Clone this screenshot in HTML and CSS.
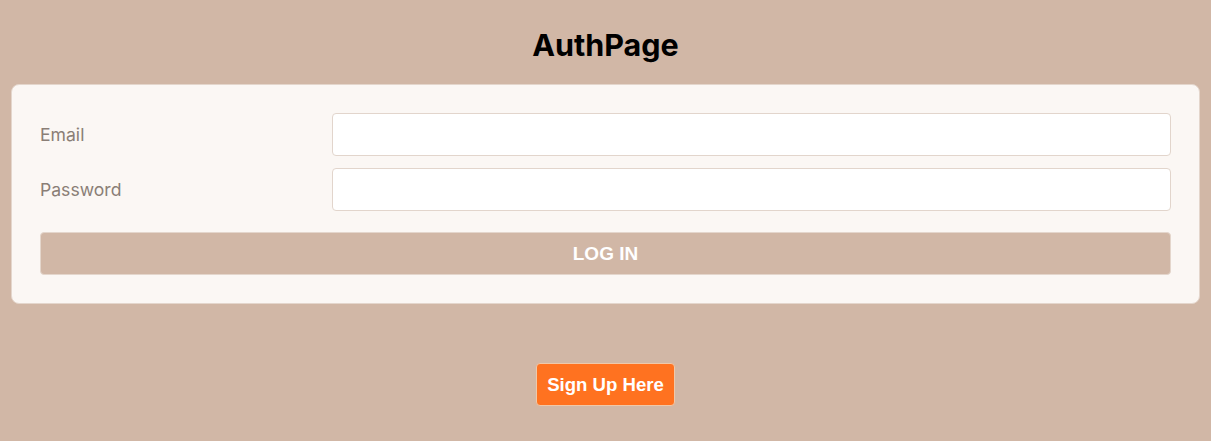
FILE: index.html
```html
<!DOCTYPE html>
<html lang="en">
<head>
<meta charset="utf-8">
<title>AuthPage</title>
<link rel="stylesheet" href="styles.css">
</head>
<body>
  <main class="page">
    <h1 class="title">AuthPage</h1>
    <form class="card">
      <div class="row">
        <label class="label" for="email">Email</label>
        <input class="input" id="email" type="email">
      </div>
      <div class="row">
        <label class="label" for="password">Password</label>
        <input class="input" id="password" type="password">
      </div>
      <button class="login" type="button">LOG IN</button>
    </form>
    <div class="signup-wrap">
      <button class="signup" type="button">Sign Up Here</button>
    </div>
  </main>
</body>
</html>
```

FILE: styles.css
```css
html, body {
  margin: 0;
  padding: 0;
  background: #d1b7a6;
  font-family: Inter, "Noto Sans", sans-serif;
}

.page {
  padding: 0 11px 0 11px;
  display: flex;
  flex-direction: column;
}

.title {
  margin: 0;
  padding-top: 25px;
  height: 84px;
  box-sizing: border-box;
  text-align: center;
  font-size: 30.5px;
  font-weight: 700;
  line-height: 40px;
  color: #000;
}

.card {
  background: #fbf7f4;
  border: 1px solid #e4d6cc;
  border-radius: 8px;
  padding: 28px 28px 28px 28px;
  display: flex;
  flex-direction: column;
  gap: 12px;
}

.row {
  display: flex;
  align-items: center;
}

.label {
  width: 292px;
  flex: none;
  font-size: 17.6px;
  color: #8a7e76;
}

.input {
  flex: 1;
  height: 43px;
  box-sizing: border-box;
  margin: 0;
  border: 1px solid #e2d5cc;
  border-radius: 4px;
  background: #fff;
  font-size: 16px;
}

.login {
  margin-top: 9px;
  height: 43px;
  border: 1px solid #e4d6cc;
  border-radius: 4px;
  background: #d1b7a6;
  color: #fff;
  font-family: "Liberation Sans", Arial, sans-serif;
  font-weight: 700;
  font-size: 19px;
  cursor: pointer;
}

.signup-wrap {
  display: flex;
  justify-content: center;
  padding-top: 59px;
}

.signup {
  height: 43px;
  padding: 0 10px;
  border: 1px solid #f0c8a8;
  border-radius: 4px;
  background: #ff7220;
  color: #fff;
  font-family: "Liberation Sans", Arial, sans-serif;
  font-weight: 700;
  font-size: 18.6px;
  cursor: pointer;
}
```
